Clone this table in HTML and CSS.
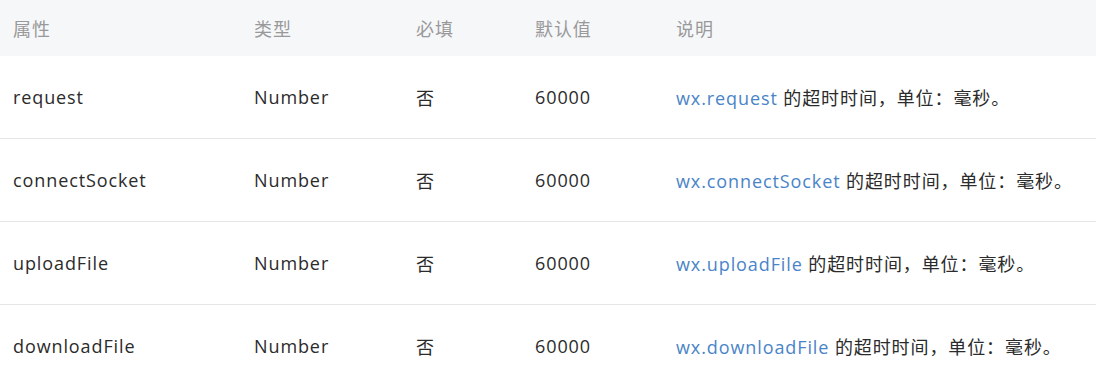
FILE: index.html
```html
<!DOCTYPE html>
<html lang="zh-CN">
<head>
<meta charset="utf-8">
<title>timeout</title>
<link rel="stylesheet" href="styles.css">
</head>
<body>
<table class="props">
  <colgroup>
    <col class="c1"><col class="c2"><col class="c3"><col class="c4"><col class="c5">
  </colgroup>
  <thead>
    <tr><th>属性</th><th>类型</th><th>必填</th><th>默认值</th><th>说明</th></tr>
  </thead>
  <tbody>
    <tr><td>request</td><td>Number</td><td>否</td><td>60000</td><td><a class="api">wx.request</a> 的超时时间，单位：毫秒。</td></tr>
    <tr><td>connectSocket</td><td>Number</td><td>否</td><td>60000</td><td><a class="api">wx.connectSocket</a> 的超时时间，单位：毫秒。</td></tr>
    <tr><td>uploadFile</td><td>Number</td><td>否</td><td>60000</td><td><a class="api">wx.uploadFile</a> 的超时时间，单位：毫秒。</td></tr>
    <tr><td>downloadFile</td><td>Number</td><td>否</td><td>60000</td><td><a class="api">wx.downloadFile</a> 的超时时间，单位：毫秒。</td></tr>
  </tbody>
</table>
</body>
</html>
```
FILE: styles.css
```css
html, body {
  margin: 0;
  padding: 0;
  background: #fff;
}
body {
  font-family: "Open Sans", "Noto Sans CJK SC", sans-serif;
  font-size: 18px;
  color: #2b2b2b;
  letter-spacing: 0.9px;
}
.props {
  width: 1096px;
  border-collapse: collapse;
  table-layout: fixed;
}
.c1 { width: 241px; }
.c2 { width: 162px; }
.c3 { width: 119px; }
.c4 { width: 141px; }
.props th {
  background: #f6f7f9;
  color: #999;
  font-weight: normal;
  text-align: left;
  height: 56px;
  padding: 0 0 0 13px;
  vertical-align: middle;
}
.props td {
  height: 82px;
  padding: 0 0 0 13px;
  border-bottom: 1px solid #e6e6e6;
  vertical-align: middle;
  white-space: nowrap;
}
.api {
  color: #4a84c8;
  text-decoration: none;
}
```
